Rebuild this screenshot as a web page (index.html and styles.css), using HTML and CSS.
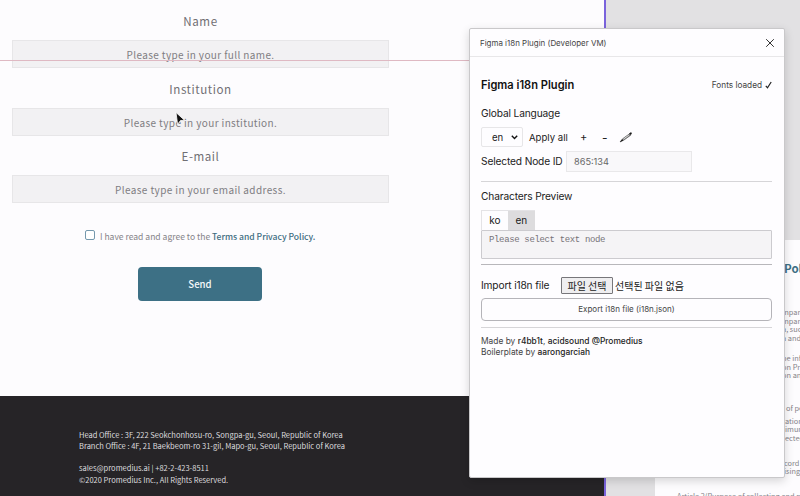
FILE: index.html
```html
<!DOCTYPE html>
<html lang="en">
<head>
<meta charset="utf-8">
<title>Figma i18n Plugin</title>
<link rel="stylesheet" href="styles.css">
</head>
<body>
<main class="canvas">
  <section class="frame">
    <form class="contact">
      <label class="label">Name</label>
      <div class="field">Please type in your full name.</div>
      <label class="label">Institution</label>
      <div class="field">Please type in your institution.</div>
      <label class="label">E-mail</label>
      <div class="field">Please type in your email address.</div>
      <div class="agree"><span class="box"></span><span class="agree-text">I have read and agree to the <b>Terms and Privacy Policy.</b></span></div>
      <div class="send">Send</div>
    </form>
    <footer class="footer">
      <p>Head Office : 3F, 222 Seokchonhosu-ro, Songpa-gu, Seoul, Republic of Korea</p>
      <p>Branch Office : 4F, 21 Baekbeom-ro 31-gil, Mapo-gu, Seoul, Republic of Korea</p>
      <p class="mail">sales@promedius.ai | +82-2-423-8511</p>
      <p class="copy">©2020 Promedius Inc., All Rights Reserved.</p>
    </footer>
  </section>
  <article class="policy">
    <h2>Pol</h2>
    <div class="para p1"><p>mpan</p><p>mpar</p><p>a, suc</p><p>a and</p></div>
    <div class="para p2"><p>he inf</p><p>on Pr</p><p>on an</p></div>
    <div class="para p3"><p>of pe</p></div>
    <div class="para p4"><p>ation</p><p>imun</p><p>ected</p></div>
    <div class="para p5"><p>cord</p><p>ising</p></div>
    <p class="article">Article 2(Purpose of collecting and proce</p>
  </article>
  <div class="guide"></div>
  <svg class="cursor" width="12" height="16" viewBox="0 0 12 16"><path d="M1 1.5 9.5 9.2 5.4 9.6 2.6 13.5Z" fill="#111" stroke="#fff" stroke-width=".8"/></svg>

  <section class="plugin">
    <header class="bar">
      <span class="bar-title">Figma i18n Plugin (Developer VM)</span>
      <svg width="10" height="10" viewBox="0 0 10 10"><path d="M1.2 1.2 8.8 8.8M8.8 1.2 1.2 8.8" stroke="#333" stroke-width="1" fill="none"/></svg>
    </header>
    <div class="body">
      <div class="head"><h1>Figma i18n Plugin</h1><span class="loaded">Fonts loaded <svg width="7" height="8" viewBox="0 0 7 8"><path d="M.8 4.8 2.5 6.8 6.2 1" stroke="#222" stroke-width="1.2" fill="none"/></svg></span></div>
      <div class="title global">Global Language</div>
      <div class="controls">
        <div class="select"><span>en</span><svg width="7" height="5" viewBox="0 0 7 5"><path d="M.8.8 3.5 3.6 6.2.8" stroke="#111" stroke-width="1.4" fill="none"/></svg></div>
        <span class="apply">Apply all</span><span class="plus">+</span><span class="minus">-</span>
        <svg class="pen" width="14" height="12" viewBox="0 0 14 12"><path d="M1 11 3.6 7.8 10.2 3 11.7 4.2 5 9Z" fill="#888" stroke="#444" stroke-width=".6"/><path d="M1 11 3.2 8.3 4.3 9.4ZM9.9 2.8 11.8 1.2 13 2.1 11.9 4Z" fill="#181818"/><path d="M4.4 8.1 9.8 4.2" stroke="#fff" stroke-width=".7"/></svg>
      </div>
      <div class="node"><span class="title">Selected Node ID</span><div class="node-id">865:134</div></div>
      <div class="rule r1"></div>
      <div class="title preview">Characters Preview</div>
      <div class="tabs"><span class="tab">ko</span><span class="tab active">en</span></div>
      <div class="area">Please select text node</div>
      <div class="rule r2"></div>
      <div class="import"><span class="title">Import i18n file</span><span class="choose">파일 선택</span><span class="none">선택된 파일 없음</span></div>
      <div class="export">Export i18n file (i18n.json)</div>
      <div class="rule r3"></div>
      <div class="credits"><p>Made by <b>r4bb1t</b>, <b>acidsound @Promedius</b></p><p>Boilerplate by <b>aarongarciah</b></p></div>
    </div>
  </section>
</main>
</body>
</html>
```
FILE: styles.css
```css
* { box-sizing: border-box; }
body, p, h1, h2 { margin: 0; }
svg { display: block; flex: none; }
.canvas {
  position: relative; width: 800px; height: 496px; overflow: hidden;
  background: #e2e1e3; font-family: "Noto Sans CJK KR", sans-serif; white-space: nowrap;
}
.frame {
  position: absolute; left: 0; top: 0; width: 606px; height: 496px;
  display: flex; flex-direction: column; background: #fdfcfe; border-right: 2px solid #7a63dc;
}
.contact { width: 377px; height: 396px; margin-left: 12px; padding-top: 2px; color: #858388; }
.label { display: block; height: 38px; line-height: 38px; font-size: 11.6px; font-weight: 400; letter-spacing: .55px; text-align: center; color: #716f74; }
.field {
  height: 28px; margin-bottom: 1.6px; line-height: 27px; font-size: 10px; letter-spacing: .38px; text-align: center;
  background: #f2f1f3; border: 1px solid #e7e6e8; color: #7f7d82;
}
.agree { display: flex; align-items: center; height: 18px; margin: 23px 0 0 73px; font-size: 8.55px; }
.agree-text { padding-top: 1px; }
.box { width: 10px; height: 10px; margin-right: 5px; border: 1px solid #7598ad; border-radius: 2px; background: #fff; }
.agree b { color: #3d6c81; font-weight: 500; }
.send {
  width: 124px; height: 34px; margin: 23px 0 0 126px; border-radius: 4px; background: #3d7085;
  color: #f5f8fa; font-size: 9.6px; font-weight: 500; line-height: 34px; text-align: center;
}
.footer { height: 100px; padding: 33px 0 0 79px; background: #262427; color: #dddcdf; font-size: 7.5px; line-height: 11px; }
.mail { margin-top: 11px; }
.copy { margin-top: 1px; }
.policy {
  position: absolute; left: 655px; top: 240px; width: 145px; height: 256px; padding-top: 20px; overflow: hidden;
  background: #fdfcfe; color: #858388; font-size: 7.4px; line-height: 8.7px;
}
.policy h2 { margin-left: 129px; color: #3d7085; font-size: 11.5px; font-weight: 700; line-height: 16px; }
.para { margin-left: 127px; }
.p1 { margin-top: 32px; }
.p2 { margin-top: 11px; }
.p3 { margin: 24px 0 0 131px; }
.p4 { margin: 4px 0 0 130px; }
.p5 { margin: 16px 0 0 129px; }
.article { margin: 16px 0 0 22px; }
.guide { position: absolute; left: 0; top: 60px; width: 470px; height: 1px; background: #dfb9c3; }
.cursor { position: absolute; left: 175px; top: 111px; }
.plugin {
  position: absolute; left: 469px; top: 28px; width: 316px; height: 450px;
  display: flex; flex-direction: column; background: #fefdff; border: 1px solid #c9c8ca; border-radius: 2px;
  box-shadow: 0 3px 10px rgba(0,0,0,.16); color: #222; font-family: Inter, sans-serif;
}
.bar { display: flex; align-items: center; justify-content: space-between; height: 28px; padding: 0 9px 0 10px; border-bottom: 1px solid #e8e7e9; font-size: 7.95px; color: #444; }
.body { display: flex; flex-direction: column; padding: 17px 12px 0 11px; }
.head { display: flex; align-items: center; justify-content: space-between; height: 21px; }
h1 { font-size: 11.1px; font-weight: 600; color: #111; }
.loaded { display: flex; align-items: center; gap: 3px; font-size: 8.25px; color: #444; }
.title { font-size: 10.2px; letter-spacing: -.15px; }
.global { height: 16px; margin-top: 10px; line-height: 16px; }
.controls { display: flex; align-items: center; height: 20px; margin-top: 6px; font-size: 9.6px; }
.select { display: flex; align-items: center; justify-content: space-between; width: 42px; height: 20px; padding: 0 4px 0 10px; border: 1px solid #e7e6e8; border-radius: 2px; }
.apply { width: 51px; margin-left: 6px; }
.plus { width: 22px; font-size: 11px; }
.minus { width: 17px; font-size: 12px; }
.node { display: flex; align-items: center; height: 21px; margin-top: 4px; }
.node .title { width: 82px; padding-bottom: 1px; }
.node-id { width: 126px; height: 21px; margin-left: 3px; padding-left: 7px; border: 1px solid #e9e8ea; background: #f9f8fa; color: #666; font-size: 9.2px; line-height: 19px; }
.rule { height: 1px; background: #d6d5d8; }
.r1 { margin-top: 9px; }
.preview { height: 16px; margin-top: 6px; line-height: 16px; }
.tabs { display: flex; width: 54px; height: 20px; margin-top: 6px; border: solid #e4e3e6; border-width: 1px 0 0 1px; font-size: 10px; line-height: 19px; text-align: center; }
.tab { width: 26px; }
.active { width: 28px; background: #dddcde; }
.area { height: 29px; padding: 1px 7px; border: 1px solid #cccbcf; border-radius: 1px; background: #f5f4f6; color: #757378; font-family: "Liberation Mono", monospace; font-size: 9px; letter-spacing: -.35px; line-height: 17px; }
.r2 { margin-top: 5px; background: #b8b7bb; }
.import { display: flex; align-items: center; height: 18px; margin-top: 11px; }
.import .title { width: 80px; }
.choose, .none { font-family: "Noto Sans CJK KR", sans-serif; font-size: 10px; }
.choose { width: 52px; height: 17px; margin-right: 2px; border: 1px solid #77767a; border-radius: 1px; background: #efeef0; line-height: 15px; text-align: center; }
.export { height: 23px; margin-top: 4px; border: 1px solid #b5b4b9; border-radius: 4px; font-size: 8px; line-height: 21px; text-align: center; color: #444; }
.r3 { margin-top: 6px; }
.credits { margin-top: 8px; font-size: 8.4px; line-height: 11px; color: #444; }
.credits b { font-weight: 500; color: #222; }
```
